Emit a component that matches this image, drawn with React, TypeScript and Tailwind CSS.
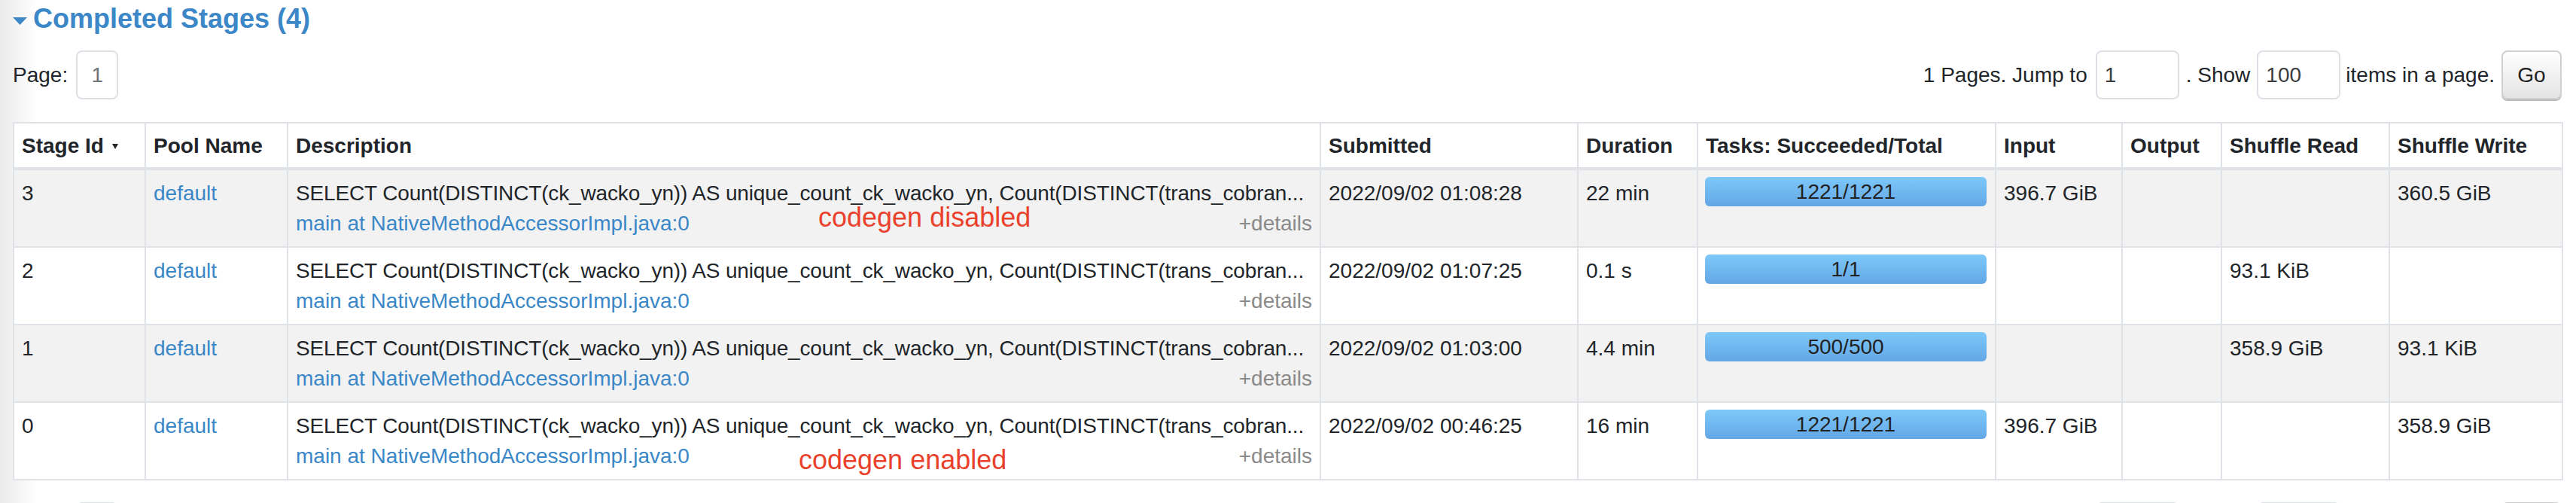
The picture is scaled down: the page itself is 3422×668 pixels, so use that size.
import React from "react";

interface StageRow {
  id: string;
  submitted: string;
  duration: string;
  tasks: string;
  input: string;
  output: string;
  shuffleRead: string;
  shuffleWrite: string;
  note?: { text: string; left: string; top: string };
}

const DESC =
  "SELECT Count(DISTINCT(ck_wacko_yn)) AS unique_count_ck_wacko_yn, Count(DISTINCT(trans_cobran...";

const ROWS: StageRow[] = [
  { id: "3", submitted: "2022/09/02 01:08:28", duration: "22 min", tasks: "1221/1221", input: "396.7 GiB", output: "", shuffleRead: "", shuffleWrite: "360.5 GiB", note: { text: "codegen disabled", left: "left-[704px]", top: "top-[43px]" } },
  { id: "2", submitted: "2022/09/02 01:07:25", duration: "0.1 s", tasks: "1/1", input: "", output: "", shuffleRead: "93.1 KiB", shuffleWrite: "" },
  { id: "1", submitted: "2022/09/02 01:03:00", duration: "4.4 min", tasks: "500/500", input: "", output: "", shuffleRead: "358.9 GiB", shuffleWrite: "93.1 KiB" },
  { id: "0", submitted: "2022/09/02 00:46:25", duration: "16 min", tasks: "1221/1221", input: "396.7 GiB", output: "", shuffleRead: "", shuffleWrite: "358.9 GiB", note: { text: "codegen enabled", left: "left-[678px]", top: "top-[56px]" } },
];

const COLS = [
  { label: "Stage Id", w: "w-[175px]" },
  { label: "Pool Name", w: "w-[189px]" },
  { label: "Description", w: "w-[1372px]" },
  { label: "Submitted", w: "w-[342px]" },
  { label: "Duration", w: "w-[159px]" },
  { label: "Tasks: Succeeded/Total", w: "w-[396px]" },
  { label: "Input", w: "w-[168px]" },
  { label: "Output", w: "w-[132px]" },
  { label: "Shuffle Read", w: "w-[223px]" },
  { label: "Shuffle Write", w: "w-[230px]" },
];

function Pagination() {
  return (
    <div className="flex items-center justify-between h-[65px] text-[28px] leading-[40px] text-[#212529]">
      <div className="flex items-center gap-[11px]">
        <span>Page:</span>
        <div className="w-[56px] h-[65px] border-2 border-[#dde1e6] rounded-[8px] flex items-center justify-center text-[#6f7378]">
          1
        </div>
      </div>
      <div className="flex items-center">
        <span>1 Pages. Jump to</span>
        <div className="ml-[11px] w-[111px] h-[65px] border-2 border-[#dde1e6] rounded-[8px] flex items-center pl-[10px] text-[#3a3d40]">
          1
        </div>
        <span className="ml-[9px]">. Show</span>
        <div className="ml-[9px] w-[111px] h-[65px] border-2 border-[#dde1e6] rounded-[8px] flex items-center pl-[10px] text-[#3a3d40]">
          100
        </div>
        <span className="ml-[7px]">items in a page.</span>
        <button className="ml-[9px] w-[80px] h-[65px] border-2 border-[#d0d0d0] rounded-[8px] bg-gradient-to-b from-[#ffffff] to-[#e4e4e4] shadow-[0_2px_0_#b9b9b9] text-[#222] flex items-center justify-center">
          Go
        </button>
      </div>
    </div>
  );
}

export default function App() {
  return (
    <div className="h-screen overflow-hidden bg-[linear-gradient(to_right,#ebebeb_0px,#f1f1f1_16px,#ffffff_48px)] font-['Liberation_Sans',Arial,sans-serif] pl-[17px] pr-[19px]">
      {/* Section header */}
      <div className="flex items-start pt-[3px] gap-[8px] text-[#3b87c7]">
        <svg width="19" height="10" viewBox="0 0 19 10" className="mt-[20px] shrink-0">
          <polygon points="0,0 19,0 9.5,10" fill="#3b87c7" />
        </svg>
        <span className="text-[36px] leading-[43px] font-bold">Completed Stages (4)</span>
      </div>

      <div className="mt-[21px]">
        <Pagination />
      </div>

      <table className="mt-[30px] table-fixed border-collapse w-[3386px] text-[28px] leading-[40px] text-[#212529]">
        <colgroup>
          {COLS.map(c => (
            <col key={c.label} className={c.w} />
          ))}
        </colgroup>
        <thead>
          <tr className="bg-white">
            {COLS.map(c => (
              <th
                key={c.label}
                className="border-2 border-b-4 border-[#dfe2e6] px-[10px] pt-[10px] pb-[8px] text-left font-bold whitespace-nowrap"
              >
                {c.label === "Stage Id" ? (
                  <span className="flex items-center gap-[11px]">
                    Stage Id
                    <svg width="8" height="7" viewBox="0 0 8 7">
                      <polygon points="0,0 8,0 4,7" fill="#212529" />
                    </svg>
                  </span>
                ) : (
                  c.label
                )}
              </th>
            ))}
          </tr>
        </thead>
        <tbody>
          {ROWS.map((r, i) => {
            const td = "border-2 border-[#dfe2e6] px-[10px] pt-[11px] pb-[10px] align-top whitespace-nowrap";
            return (
              <tr key={r.id} className={i % 2 === 0 ? "bg-[#f2f2f2]" : "bg-white"}>
                <td className={td}>{r.id}</td>
                <td className={td}>
                  <span className="text-[#3a87c8]">default</span>
                </td>
                <td className={`${td} relative`}>
                  <div className="tracking-[-0.15px]">{DESC}</div>
                  <div className="flex justify-between">
                    <span className="text-[#3a87c8]">main at NativeMethodAccessorImpl.java:0</span>
                    <span className="text-[#8a8a8a]">+details</span>
                  </div>
                  {r.note && (
                    <span
                      className={`absolute ${r.note.left} ${r.note.top} text-[36px] leading-[40px] text-[#e9412c]`}
                    >
                      {r.note.text}
                    </span>
                  )}
                </td>
                <td className={td}>{r.submitted}</td>
                <td className={td}>{r.duration}</td>
                <td className="border-2 border-[#dfe2e6] pl-[9px] pr-[11px] pt-[9px] pb-[10px] align-top">
                  <div className="h-[39px] rounded-[6px] bg-gradient-to-b from-[#7ec8f9] to-[#63a7e6] flex items-center justify-center text-[#222]">
                    {r.tasks}
                  </div>
                </td>
                <td className={td}>{r.input}</td>
                <td className={td}>{r.output}</td>
                <td className={td}>{r.shuffleRead}</td>
                <td className={td}>{r.shuffleWrite}</td>
              </tr>
            );
          })}
        </tbody>
      </table>

      <div className="mt-[29px]">
        <Pagination />
      </div>
    </div>
  );
}
